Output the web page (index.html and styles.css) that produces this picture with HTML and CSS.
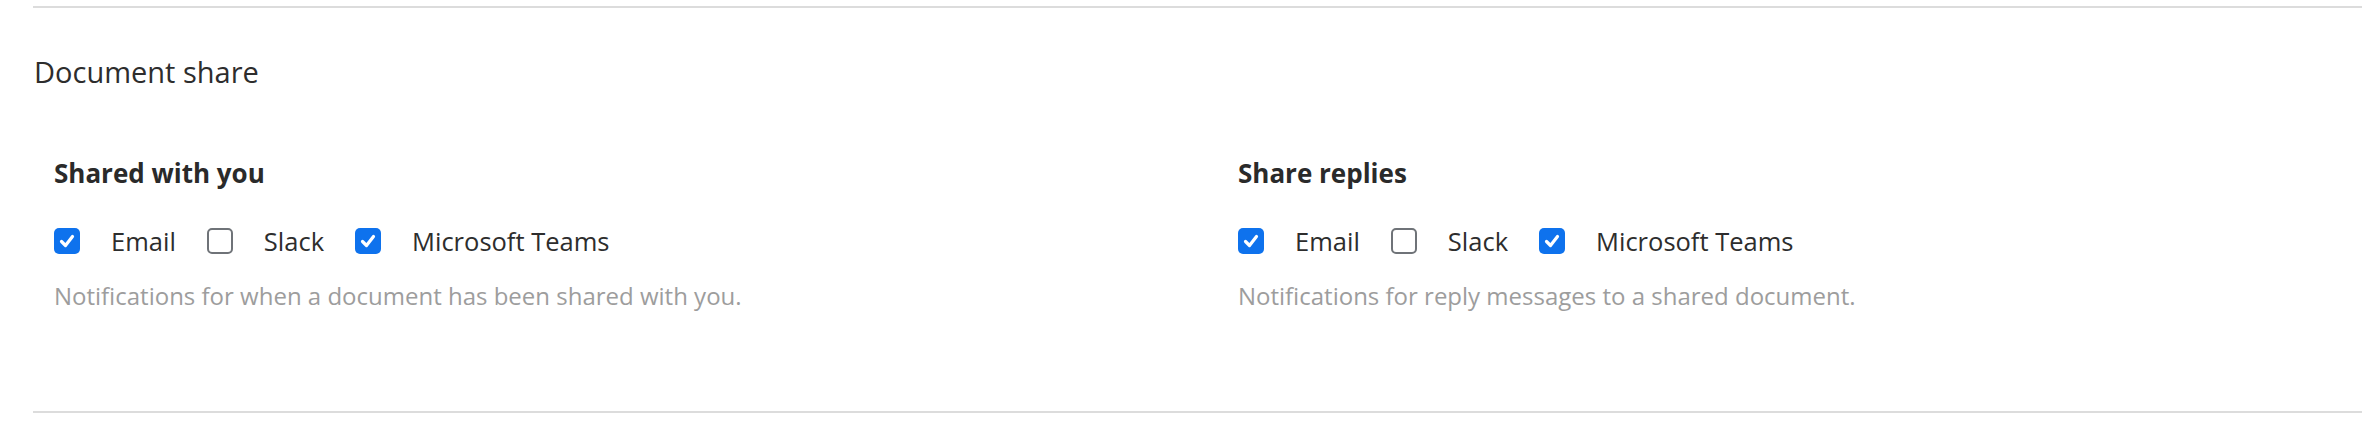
FILE: index.html
```html
<!DOCTYPE html>
<html lang="en">
<head>
<meta charset="utf-8">
<title>Document share</title>
<link rel="stylesheet" href="styles.css">
</head>
<body>
<section class="panel">
  <h2 class="panel-title">Document share</h2>
  <div class="groups">
    <div class="group">
      <h3 class="group-title">Shared with you</h3>
      <div class="options">
        <label class="option"><span class="box checked"><svg viewBox="0 0 26 26"><path d="M7.5 13.5l4 4 7-9" /></svg></span><span class="label">Email</span></label>
        <label class="option"><span class="box"></span><span class="label">Slack</span></label>
        <label class="option"><span class="box checked"><svg viewBox="0 0 26 26"><path d="M7.5 13.5l4 4 7-9" /></svg></span><span class="label">Microsoft Teams</span></label>
      </div>
      <p class="desc">Notifications for when a document has been shared with you.</p>
    </div>
    <div class="group">
      <h3 class="group-title">Share replies</h3>
      <div class="options">
        <label class="option"><span class="box checked"><svg viewBox="0 0 26 26"><path d="M7.5 13.5l4 4 7-9" /></svg></span><span class="label">Email</span></label>
        <label class="option"><span class="box"></span><span class="label">Slack</span></label>
        <label class="option"><span class="box checked"><svg viewBox="0 0 26 26"><path d="M7.5 13.5l4 4 7-9" /></svg></span><span class="label">Microsoft Teams</span></label>
      </div>
      <p class="desc">Notifications for reply messages to a shared document.</p>
    </div>
  </div>
</section>
</body>
</html>
```

FILE: styles.css
```css
html, body {
  margin: 0;
  padding: 0;
  background: #ffffff;
}

body {
  font-family: "Open Sans", "Liberation Sans", sans-serif;
  color: #2b2b2b;
}

.panel {
  margin: 6px 8px 0 33px;
  border-top: 2px solid #dcdcdc;
  border-bottom: 2px solid #dcdcdc;
  padding: 0 0 100px 0;
}

.panel-title {
  margin: 44px 0 0 1px;
  font-size: 29px;
  line-height: 40px;
  font-weight: 400;
  color: #2d2d2d;
}

.groups {
  display: grid;
  grid-template-columns: 1184px 1fr;
  padding-left: 21px;
  margin-top: 65px;
}

.group-title {
  margin: 0;
  font-size: 26px;
  line-height: 32px;
  font-weight: 700;
  color: #2a2a2a;
}

.options {
  display: flex;
  align-items: center;
  gap: 31px;
  margin-top: 39px;
}

.option {
  display: flex;
  align-items: center;
  gap: 31px;
}

.box {
  box-sizing: border-box;
  width: 26px;
  height: 26px;
  border: 2px solid #6f7378;
  border-radius: 5px;
  background: #fff;
  display: flex;
}

.box.checked {
  border: none;
  background: #0e72ed;
}

.box svg {
  width: 26px;
  height: 26px;
}

.box path {
  fill: none;
  stroke: #fff;
  stroke-width: 3.2;
  stroke-linecap: round;
  stroke-linejoin: round;
}

.label {
  font-size: 25.5px;
  line-height: 26px;
  color: #2d2d2d;
}

.desc {
  margin: 27px 0 0 0;
  font-size: 24px;
  line-height: 30px;
  color: #9d9d9d;
}
```
